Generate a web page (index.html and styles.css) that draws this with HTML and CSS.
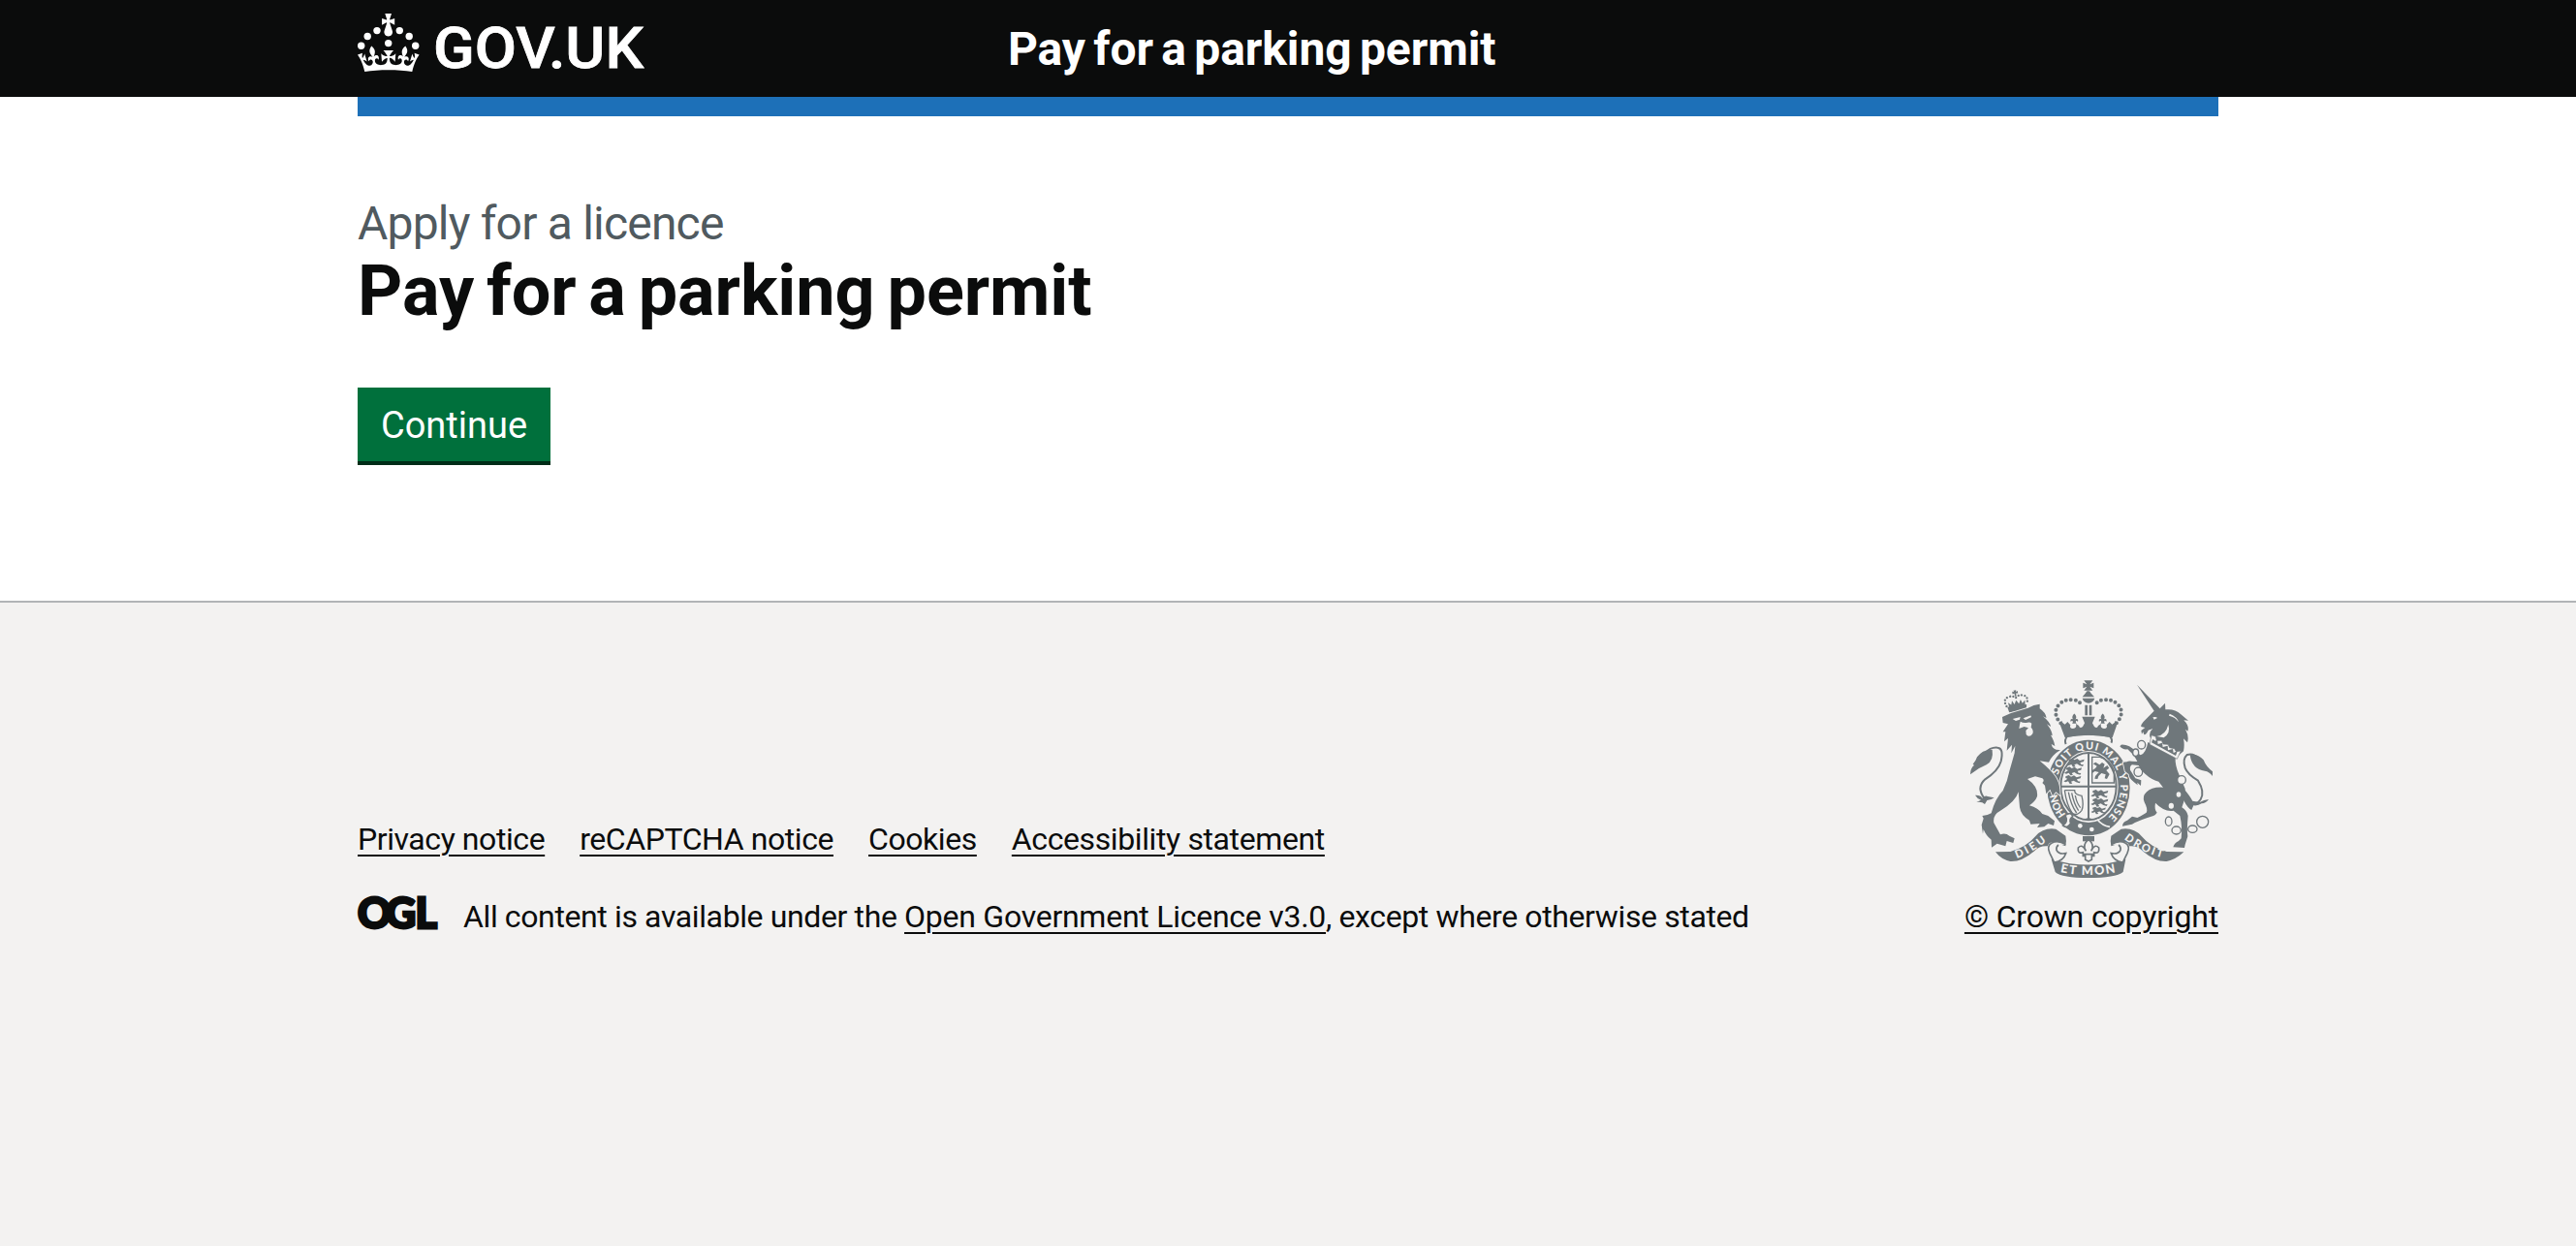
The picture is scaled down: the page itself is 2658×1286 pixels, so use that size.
FILE: index.html
```html
<!DOCTYPE html>
<html lang="en">
<head>
<meta charset="utf-8">
<title>Pay for a parking permit</title>
<link rel="stylesheet" href="styles.css">
</head>
<body>
<header class="header">
  <div class="header__container container">
    <a class="header__logo" href="#" aria-label="GOV.UK">
      <svg class="header__logotype" viewBox="0 0 324 60" width="324" height="60" fill="currentColor">
        <circle cx="10.2" cy="23.5" r="3.7"/><circle cx="20" cy="17.6" r="3.7"/><circle cx="3.7" cy="33.2" r="3.7"/><circle cx="31.7" cy="30.6" r="3.7"/><circle cx="43.3" cy="17.6" r="3.7"/><circle cx="53.2" cy="23.5" r="3.7"/><circle cx="59.7" cy="33.2" r="3.7"/>
        <path d="M33.1,9.8c.2-.1.3-.3.5-.5l4.6,2.4v-6.8l-4.6,1.5c-.1-.2-.3-.3-.5-.5l1.9-5.9h-6.7l1.9,5.9c-.2.1-.3.3-.5.5l-4.6-1.5v6.8l4.6-2.4c.1.2.3.3.5.5l-2.6,8c-.9,2.8,1.2,5.7,4.1,5.7h0c3,0,5.1-2.9,4.1-5.7l-2.6-8ZM37,37.9s-3.4,3.8-4.1,6.1c2.2,0,4.2-.5,6.4-2.8l-.7,8.5c-2-2.8-4.4-4.1-5.7-3.8.1,3.1.5,6.7,5.8,7.2,3.7.3,6.7-1.5,7-3.8.4-2.6-2-4.3-3.7-1.6-1.4-4.5,2.4-6.1,4.9-3.2-1.9-4.5-1.8-7.7,2.4-10.9,3,4,2.6,7.3-1.2,11.1,2.4-1.3,6.2,0,4,4.6-1.2-2.8-3.7-2.2-4.2.2-.3,1.7.7,3.7,3,4.2,1.9.3,4.7-.9,7-5.9-1.3,0-2.4.7-3.9,1.7l2.4-8c.6,2.3,1.4,3.7,2.2,4.5.6-1.6.5-2.8,0-5.3l5,1.8c-2.6,3.6-5.2,8.7-7.3,17.5-7.4-1.1-15.7-1.7-24.5-1.7h0c-8.8,0-17.1.6-24.5,1.7-2.1-8.9-4.7-13.9-7.3-17.5l5-1.8c-.5,2.5-.6,3.7,0,5.3.8-.8,1.6-2.3,2.2-4.5l2.4,8c-1.5-1-2.6-1.7-3.9-1.7,2.3,5,5.2,6.2,7,5.9,2.3-.4,3.3-2.4,3-4.2-.5-2.4-3-3.1-4.2-.2-2.2-4.6,1.6-6,4-4.6-3.7-3.7-4.2-7.1-1.2-11.1,4.2,3.2,4.3,6.4,2.4,10.9,2.5-2.8,6.3-1.3,4.9,3.2-1.8-2.7-4.1-1-3.7,1.6.3,2.3,3.3,4.1,7,3.8,5.4-.5,5.7-4.2,5.8-7.2-1.3-.2-3.7,1-5.7,3.8l-.7-8.5c2.2,2.3,4.2,2.7,6.4,2.8-.7-2.3-4.1-6.1-4.1-6.1h10.6Z"/>
        <text class="header__wordmark" x="78" y="55.7" textLength="217" lengthAdjust="spacingAndGlyphs">GOV.UK</text>
      </svg>
    </a>
    <a class="header__service" href="#">Pay for a parking permit</a>
  </div>
</header>
<div class="container"><div class="bar"></div></div>
<main class="main container">
  <span class="caption">Apply for a licence</span>
  <h1 class="title">Pay for a parking permit</h1>
  <button class="button" type="button">Continue</button>
</main>
<footer class="footer">
  <div class="footer__container container">
    <div class="footer__meta">
      <ul class="footer__links">
        <li><a class="link" href="#">Privacy notice</a></li>
        <li><a class="link" href="#">reCAPTCHA notice</a></li>
        <li><a class="link" href="#">Cookies</a></li>
        <li><a class="link link--wide" href="#">Accessibility statement</a></li>
      </ul>
      <div class="footer__licence">
        <svg class="ogl" viewBox="0 0 82 34" width="82" height="34" role="img" aria-label="OGL">
          <text class="ogl__text" y="32.2"><tspan x="0">O</tspan><tspan x="29">G</tspan><tspan x="59.5">L</tspan></text>
        </svg>
        <span class="licence"><span class="licence__lead">All content is available under the </span><a class="link licence__name" href="#">Open Government Licence v3.0</a>, except where otherwise stated</span>
      </div>
    </div>
    <a class="footer__copyright" href="#">
      <svg class="arms" viewBox="36 33 756 618" width="252" height="206" aria-hidden="true">
        <defs>
          <path id="garter" d="M310 334A99 118 0 1 1 470 457"/>
          <path id="garter-low" d="M335 452A99 118 0 0 1 307 385"/>
          <path id="dieu" d="M183 588Q231 571 284 528"/>
          <path id="etmon" d="M317 630Q405 649 493 630"/>
          <path id="droit" d="M515 528Q567 570 642 588"/>
          <g id="guard"><path d="M2 4l10-4 7 5 9-4 8 6 14-4-2 7-11 3 3 6 8 1-3 5-10-3-8-5-8 3 4 6-8 1-5-8-8 3-6-3 7-4 5-4-6-2z"/></g>
          <path id="lis" d="M0-16c8 8 6 13 2 19 4-7 11-3 8 4-3-4-6-2-6 1l2 4h-12l2-4c0-3-3-5-6-1-3-7 4-11 8-4-4-6-6-11 2-19z"/>
        </defs>

        <!-- crown over the shield -->
        <path d="M391 37h27l-9 12 12-5v17l-12-5 9 12h-27l9-12-12 5V44l12 5zM400 70h8l4 6 11 12h-37l10-12zM386 92h38q-4 14-19 15-15-1-19-15zM394 113h8v32h-8zM407 113h8v32h-8z"/>
        <g class="beads"><path d="M378 106Q370 97 356 97Q330 94 313 112Q301 126 304 142Q308 160 322 172M431 106Q440 97 454 97Q480 94 497 112Q509 126 506 142Q502 160 488 172"/></g>
        <path d="M322 161q2 10 10 12l8-8 9 10q-4 11 8 11 13-2 9-15l9 6q3 10 12 3l6-11-8-20h40l-8 20 6 11q9 7 12-3l9-6q-4 13 9 15 12 0 8-11l9-10 8 8q8-2 10-12l4 15-13 38q-74-16-147 0l-14-38z"/>
        <use href="#lis" transform="translate(361 157) scale(1.1)"/><use href="#lis" transform="translate(449 157) scale(1.1)"/>
        <path class="line" d="M340 209Q405 198 470 209Q481 221 475 230M340 209Q329 221 335 234"/>

        <!-- garter and shield -->
        <ellipse cx="405" cy="369" rx="128" ry="148"/>
        <ellipse class="cut" cx="405" cy="366" rx="92" ry="111"/>
        <ellipse class="line" cx="405" cy="365" rx="86" ry="104"/>
        <path d="M402 262h6v100h82v6h-82v95l18 6h-42l18-6v-95h-83v-6h83z"/>
        <g><use href="#guard" transform="translate(342 278)"/><use href="#guard" transform="translate(334 304)"/><use href="#guard" transform="translate(332 330)"/><use href="#guard" transform="translate(416 375)"/><use href="#guard" transform="translate(416 401)"/><use href="#guard" transform="translate(416 428) scale(.85)"/></g>
        <path class="line line--thin" d="M416 274V354H484V316Q472 282 440 274Z"/>
        <path d="M427 290l12 8 8-7 8 5-4 12 12-8 6 8-9 7 10 12-8 15-7-2 3-12-13-4-9 9-3 9-9-1 2-8 11-12-12-3-8 5-2-7 11-7 5-7-12-7z"/>
        <path class="line line--thin" d="M331 377H362Q361 391 384 394Q391 422 384 439Q370 457 355 449Q337 422 331 377M343 383Q350 422 368 447M353 385Q359 417 374 440M364 393Q368 416 380 431"/>
        <path class="cut-line" d="M432 467Q447 486 471 490"/>
        <path class="ribbon line--thin" d="M333 454Q352 442 356 458Q344 466 350 479Q340 497 326 486Q343 475 333 454Z"/>
        <circle class="cut" cx="379" cy="487" r="7"/><circle class="cut" cx="415" cy="498" r="7"/>
        <text class="motto motto--ring"><textPath href="#garter" startOffset="4" textLength="405">SOIT QUI MAL Y PENSE</textPath></text>
        <text class="motto motto--ring"><textPath href="#garter-low" textLength="70">HON</textPath></text>

        <!-- lion -->
        <g transform="rotate(-9 181 99)"><path d="M151 115l60 1-3 16h-54z"/><path class="line line--dot" d="M149 112Q139 89 160 84Q175 82 181 91Q190 81 204 86Q221 91 213 112"/><path d="M177 67h9l-2 5 6-2v8l-6-1v9h-5v-9l-6 1v-8l6 2zM155 102l9 8 4-12 6 12 7-12 7 12 7-12 4 12 9-8-2 18h-49z"/></g>
        <path class="halo" d="M138 150L165 138L218 122Q235 112 254 110L254 124Q272 136 275 153L264 148Q286 166 288 180L276 172Q292 192 293 208L288 206Q298 222 301 240L290 234Q294 254 318 252Q292 268 282 290L254 286Q286 312 302 334Q314 352 316 374L317 392L304 382L294 394L286 374L274 388L270 362L262 354Q270 346 262 340L240 334L216 342Q250 366 246 396Q240 412 222 424Q250 432 262 450L280 456L300 472L297 486L280 480L268 490L246 492L254 480L226 482L222 470Q196 456 192 430L188 382Q180 412 130 442Q108 454 112 478L132 514Q148 508 160 518L176 526L172 540L152 534L148 550L122 542L105 554L104 530Q88 518 80 498L78 512L74 484L80 464L76 456Q94 454 104 448Q116 402 140 378Q154 350 160 318L176 262L178 240L166 262L168 236L152 254L156 216L144 226L148 196L140 196L156 172L140 168Z"/>
        <path class="cut" d="M170 156l24-6-2 8-12 4zM203 154l18-7q9-4 6 4l-17 8zM194 164q10 6 22 3 8-2 13 3l-2 12q9 9 5 20-10 14-20 2l-1-12 8-8-13-4-16 6 2-12z"/>
        <path class="line" d="M84 404Q56 369 85 343Q126 316 134 287Q143 247 124 245Q103 242 84 262"/>
        <path d="M107 252q5 34-18 46-26 10-50 30 0-19 12-29l-4-3q9-9 13-22 18-25 47-22zM54 392q17-1 22 9 10-10 17-5l20 4q-10 8-22 8l-7 12q-8-8-26-6l14-7q-12-4-18-15z"/>

        <!-- unicorn -->
        <path d="M555 50L626 124L642 107L643 127Q673 124 690 141L714 161L700 160Q718 179 712 194L705 188Q717 210 711 229L699 217Q703 237 699 256L680 272L596 214Q590 198 604 186L590 191Q585 203 577 205L574 196L570 203L568 192L580 183L568 180Q566 176 574 166L608 131Z"/>
        <path class="cut" d="M604 151q10-3 14 2l-10 5zM656 140q24 10 28 26-10-16-30-20zM616 210q28-4 36-36 8 26-14 40z"/>
        <path class="halo" d="M589 228L674 273Q672 300 686 330L704 372Q706 400 694 430Q710 440 713 456Q709 500 712 520L704 545L702 555L667 553Q672 538 684 534L692 526Q696 490 688 456L668 440Q640 445 612 416Q608 436 617 446Q612 454 606 456Q560 470 540 482L510 488Q510 474 525 470L540 458L556 462Q576 452 584 446Q590 436 578 414Q570 396 585 382Q600 366 636 368L622 350Q600 344 580 326L568 314L560 300L540 298Q532 302 534 314L550 340L568 346L567 363L556 353L557 361L545 351Q530 340 530 328L518 318L512 290L524 289Q528 285 540 287L556 288Q548 270 526 250Q510 252 502 241L506 236Q530 234 552 258L566 268Q582 264 589 228Z"/>
        <path class="belt" d="M600 206l-6 29 85 45 12-25-15 2-5-9-15-3-5-10-15-1-5-11-15 0-3-12z"/>
        <path d="M604 219l8 5 6-4 2 14 13-4 2 13 15-4 1 14 15-4 2 12 12-5-5 14-75-41z"/>
        <g class="line links"><ellipse cx="569" cy="236" rx="12" ry="13"/><ellipse class="bare" cx="551" cy="260" rx="9" ry="11"/><ellipse cx="559" cy="320" rx="13" ry="14"/><circle class="bare" cx="693" cy="345" r="13"/><ellipse cx="653" cy="473" rx="10" ry="14"/><ellipse cx="677" cy="501" rx="14" ry="12"/><ellipse cx="727" cy="497" rx="14" ry="11"/><circle cx="758" cy="475" r="18"/></g>
        <g class="cut"><ellipse cx="661" cy="425" rx="8" ry="9"/><ellipse cx="684" cy="390" rx="7" ry="8"/></g>
        <path class="line" d="M746 280Q730 260 710 267Q695 280 704 308Q712 328 744 347Q766 382 752 405Q740 423 725 416"/>
        <path d="M719 267q24-5 42 16 8 21 28 36l0 14q-10-14-24-16-40-5-46-50zM700 372q19 23 27 38l22 4q13-8 28-9-8 12-22 13-11 8-25 6l-6 14q-12-6-25-31z"/>

        <!-- scroll -->
        <path d="M117 568l46-1q51-15 78-48 25-28 63-22l30 21q4 18 0 32l-36-12q-16-2-19 12-24-3-43 16-39 33-73 31-29-6-46-29zM693 568l-46-1q-51-15-78-48-25-28-63-22l-31 21q-4 18 0 32l37-12q16-2 19 12 24-3 43 16 39 33 73 31 29-6 53-29z"/>
        <path d="M290 590Q405 625 520 590L512 630Q488 648 405 648T302 630z"/>
        <path class="ribbon" d="M334 545Q310 530 290 541Q275 550 285 572L299 600Q327 596 335 572Q312 576 306 562Q304 552 312 546"/>
        <path class="ribbon" d="M476 545Q500 530 520 541Q535 550 525 572L511 600Q483 596 475 572Q498 576 504 562Q506 552 498 546"/>
        <path d="M387 519h36v16h-36z"/>
        <path class="ribbon" d="M405 529Q426 547 413 565Q424 541 437 555Q440 575 422 569V580H415V592L405 597L395 592V580H388V569Q370 575 373 555Q386 541 397 565Q384 547 405 529ZM388 575H422"/>
        <text class="motto"><textPath href="#dieu" textLength="106">DIEU</textPath></text>
        <text class="motto motto--wide"><textPath href="#etmon" textLength="173">ET MON</textPath></text>
        <text class="motto"><textPath href="#droit" textLength="132">DROIT</textPath></text>
      </svg>
      <span class="link">© Crown copyright</span>
    </a>
  </div>
</footer>
</body>
</html>
```
FILE: styles.css
```css
* { box-sizing: border-box; }
html { background: #f3f2f1; }
body { margin: 0; background: #fff; color: #0b0c0c; font-family: Roboto, "Liberation Sans", sans-serif; }
a { color: inherit; text-decoration: none; }
svg { overflow: visible; }
.container { width: 1920px; margin: 0 auto; }

.header { height: 100px; background: #0b0c0c; color: #fff; }
.header__container { display: grid; grid-template-columns: 671px 1fr; padding: 14px 0 0; }
.header__logotype { display: block; }
.header__wordmark { font: 500 59px Roboto, sans-serif; stroke: currentColor; stroke-width: .8px; }
.header__service { margin-top: 7px; font-size: 48px; font-weight: 700; line-height: 60px; letter-spacing: -.08px; word-spacing: -3.5px; }
.bar { height: 20px; background: #1d70b8; }

.main { height: 500px; padding-top: 81px; }
.caption { display: block; color: #505a5f; font-size: 48px; line-height: 60px; letter-spacing: -.8px; }
.title { margin: 0 0 59px; font-size: 72px; font-weight: 700; line-height: 80px; letter-spacing: -.06px; word-spacing: -5px; }
.button { display: block; width: 199px; height: 76px; padding: 0; border: 0; box-shadow: 0 4px 0 #002d18; background: #00703c; color: #fff; font: 400 38px/78px Roboto, sans-serif; }

.footer { height: 666px; border-top: 2px solid #b1b4b6; background: #f3f2f1; font-size: 32px; line-height: 40px; }
.footer__container { display: flex; justify-content: space-between; align-items: flex-end; padding-top: 79px; }
.footer__links { display: flex; gap: 36px; margin: 0 0 40px; padding: 0; list-style: none; }
.footer__licence { display: flex; align-items: flex-start; gap: 27px; letter-spacing: -.38px; }
.licence__lead { white-space: pre; }
.link { letter-spacing: -.43px; text-decoration: underline; text-decoration-thickness: 2px; text-underline-offset: 5px; }
.link--wide { letter-spacing: -.39px; }
.licence__name { letter-spacing: -.26px; }
.ogl { display: block; flex: none; }
.ogl__text { font: 900 43px Lato, sans-serif; fill: currentColor; stroke: currentColor; stroke-width: 2.8px; }
.footer__copyright { display: flex; flex-direction: column; align-items: flex-end; }
.footer__copyright .link { letter-spacing: -.17px; }

.arms { margin: 0 5px 19px 0; fill: #6f777b; }
.arms .cut { fill: #f3f2f1; }
.arms .cut-line { fill: none; stroke: #f3f2f1; stroke-width: 5; }
.arms .line { fill: none; stroke: #6f777b; stroke-width: 6; }
.arms .line--thin { stroke-width: 4; }
.arms .line--dot { stroke-width: 7; stroke-linecap: round; stroke-dasharray: 0 10; }
.arms .links { stroke-width: 4; }
.arms .bare { fill: #f3f2f1; }
.arms .beads { fill: none; stroke: #6f777b; stroke-width: 12; stroke-linecap: round; stroke-dasharray: 0 15; }
.arms .belt { fill: #f3f2f1; stroke: #6f777b; stroke-width: 2; }
.arms .halo { stroke: #f3f2f1; stroke-width: 5; paint-order: stroke; }
.arms .ribbon { fill: #f3f2f1; stroke: #6f777b; stroke-width: 5; }
.motto { fill: #f3f2f1; font: 900 34px Lato, sans-serif; }
.motto--ring { font-size: 32px; }
.motto--wide { font-size: 38px; }
```
